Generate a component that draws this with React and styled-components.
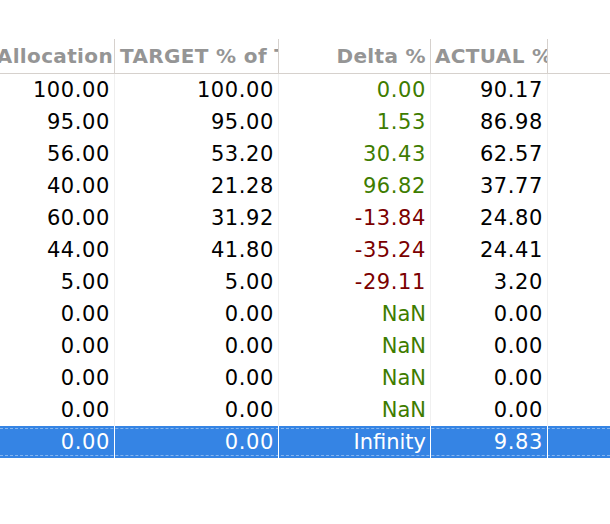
import React from "react";
import styled, { createGlobalStyle } from "styled-components";

const Global = createGlobalStyle`
  html, body { margin: 0; padding: 0; background: #ffffff; }
  body { font-family: "DejaVu Sans", sans-serif; overflow: hidden; }
`;

const COLS = "115px 164px 152px 117px 1fr";

const Table = styled.div`
  padding-top: 39px;
  width: 610px;
  height: 524px;
  box-sizing: border-box;
  background: #fff;
`;

const HeaderRow = styled.div`
  display: grid;
  grid-template-columns: ${COLS};
  height: 35px;
  border-bottom: 1px solid #d6d1cd;
  box-sizing: border-box;
`;

const HeaderCell = styled.div`
  border-right: ${(p) => (p.$last ? "none" : "1px solid #d6d1cd")};
  font-weight: bold;
  font-size: 20px;
  letter-spacing: 0.35px;
  color: #959595;
  display: flex;
  align-items: center;
  justify-content: ${(p) => (p.$align === "right" ? "flex-end" : "flex-start")};
  padding: 0 ${(p) => p.$pr || 0}px 0 ${(p) => p.$pl || 0}px;
  overflow: hidden;
  white-space: nowrap;
  box-sizing: border-box;
  min-width: 0;
`;

const Row = styled.div`
  display: grid;
  grid-template-columns: ${COLS};
  height: 32px;
  position: relative;
  background: ${(p) => (p.$selected ? "#3584e4" : "#fff")};
  color: ${(p) => (p.$selected ? "#fff" : "#000")};
  &::after {
    content: "";
    display: ${(p) => (p.$selected ? "block" : "none")};
    position: absolute;
    left: 0;
    right: 0;
    top: 2px;
    bottom: 2px;
    border-top: 1px dashed rgba(255, 255, 255, 0.4);
    border-bottom: 1px dashed rgba(255, 255, 255, 0.4);
    pointer-events: none;
  }
`;

const Cell = styled.div`
  border-right: ${(p) =>
    p.$last ? "none" : p.$selected ? "1px solid #ffffff" : "1px solid #f0f0f0"};
  font-size: 21px;
  letter-spacing: ${(p) => (p.$word ? "0" : "0.6px")};
  display: flex;
  align-items: center;
  justify-content: flex-end;
  padding-right: 4px;
  box-sizing: border-box;
  white-space: nowrap;
  color: ${(p) =>
    p.$selected ? "#fff" : p.$tone === "pos" ? "#3e7c00" : p.$tone === "neg" ? "#7b0000" : "#000"};
`;

const rows = [
  ["100.00", "100.00", "0.00", "90.17"],
  ["95.00", "95.00", "1.53", "86.98"],
  ["56.00", "53.20", "30.43", "62.57"],
  ["40.00", "21.28", "96.82", "37.77"],
  ["60.00", "31.92", "-13.84", "24.80"],
  ["44.00", "41.80", "-35.24", "24.41"],
  ["5.00", "5.00", "-29.11", "3.20"],
  ["0.00", "0.00", "NaN", "0.00"],
  ["0.00", "0.00", "NaN", "0.00"],
  ["0.00", "0.00", "NaN", "0.00"],
  ["0.00", "0.00", "NaN", "0.00"],
  ["0.00", "0.00", "Infinity", "9.83"],
];

export default function App() {
  return (
    <>
      <Global />
      <Table>
        <HeaderRow>
          <HeaderCell $align="right" $pr={1}>Allocation</HeaderCell>
          <HeaderCell $pl={5}>TARGET % of Total</HeaderCell>
          <HeaderCell $align="right" $pr={4}>Delta %</HeaderCell>
          <HeaderCell $pl={4}>ACTUAL %</HeaderCell>
          <HeaderCell $last />
        </HeaderRow>
        {rows.map((r, i) => {
          const sel = i === rows.length - 1;
          const d = r[2];
          const tone = d.startsWith("-") ? "neg" : "pos";
          const word = /[A-Za-z]/.test(d);
          return (
            <Row key={i} $selected={sel}>
              <Cell $selected={sel}>{r[0]}</Cell>
              <Cell $selected={sel}>{r[1]}</Cell>
              <Cell $selected={sel} $tone={tone} $word={word}>{d}</Cell>
              <Cell $selected={sel}>{r[3]}</Cell>
              <Cell $selected={sel} $last />
            </Row>
          );
        })}
      </Table>
    </>
  );
}
